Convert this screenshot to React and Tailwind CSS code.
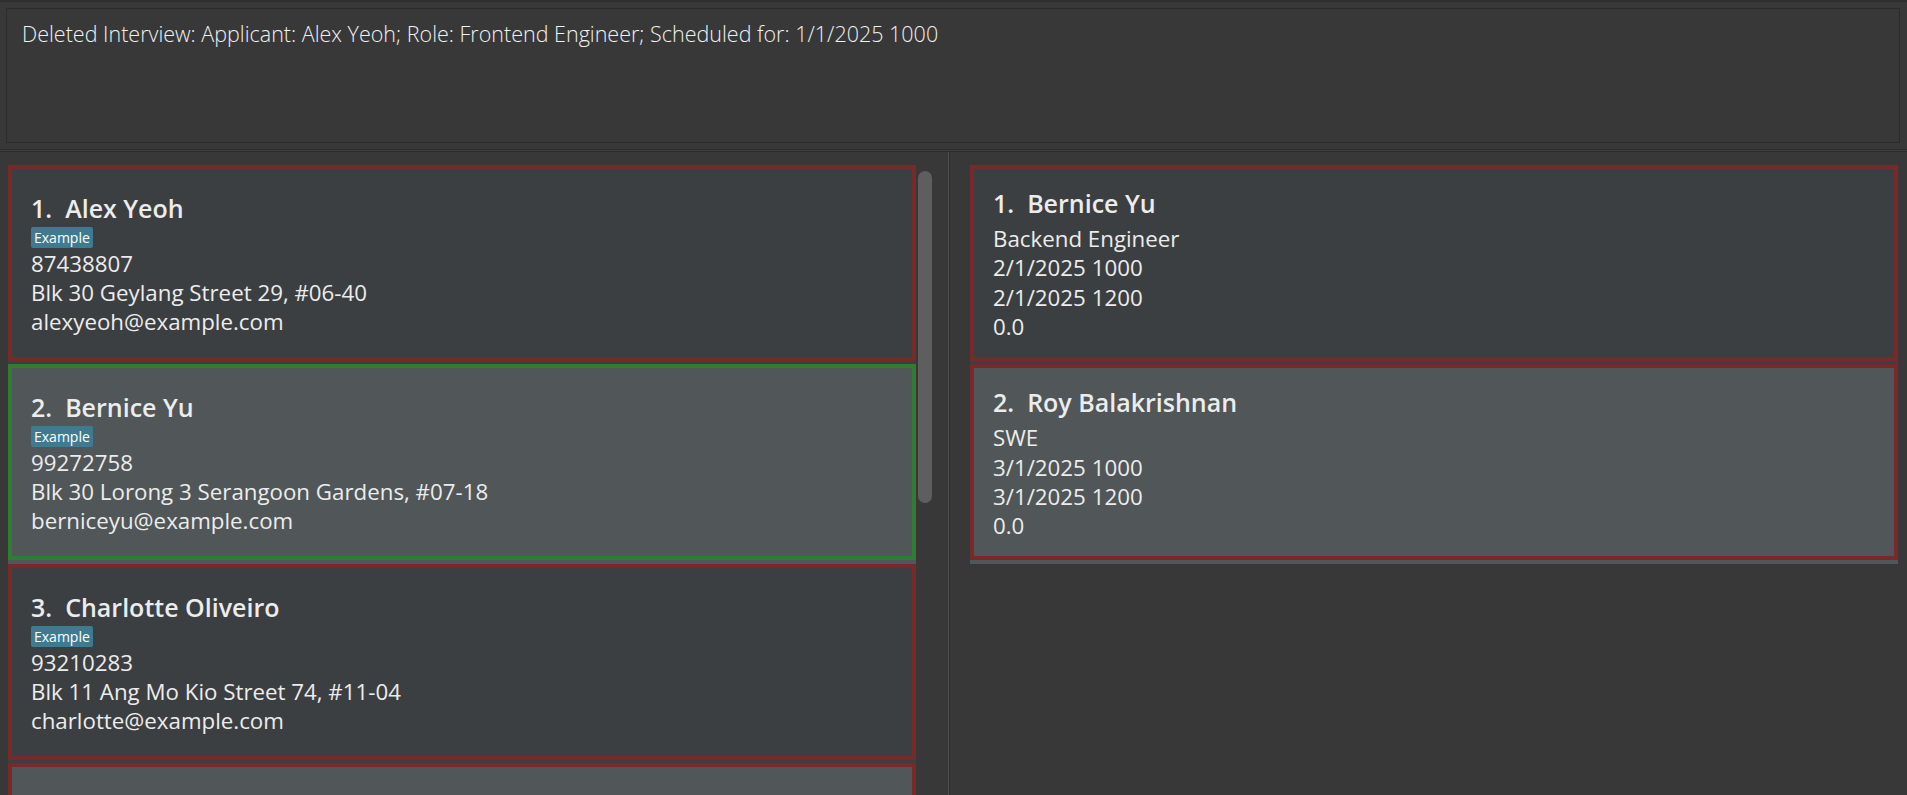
import React from "react";

const applicants = [
  {
    name: "Alex Yeoh",
    phone: "87438807",
    address: "Blk 30 Geylang Street 29, #06-40",
    email: "alexyeoh@example.com",
  },
  {
    name: "Bernice Yu",
    phone: "99272758",
    address: "Blk 30 Lorong 3 Serangoon Gardens, #07-18",
    email: "berniceyu@example.com",
    selected: true,
  },
  {
    name: "Charlotte Oliveiro",
    phone: "93210283",
    address: "Blk 11 Ang Mo Kio Street 74, #11-04",
    email: "charlotte@example.com",
  },
];

const interviews = [
  { name: "Bernice Yu", role: "Backend Engineer", start: "2/1/2025 1000", end: "2/1/2025 1200", score: "0.0" },
  { name: "Roy Balakrishnan", role: "SWE", start: "3/1/2025 1000", end: "3/1/2025 1200", score: "0.0" },
];

const Cell = ({ index, selected, children }) => {
  const odd = index % 2 === 1;
  return (
    <div className={`pb-[3.3px] ${odd ? "bg-[#515658]" : "bg-[#3c3f41]"}`}>
      <div
        className={`h-[196px] border-[4px] ${
          selected ? "border-[#2e7d32]" : "border-[#782a2a]"
        }`}
      >
        {children}
      </div>
    </div>
  );
};

const ApplicantCard = ({ person, index }) => (
  <Cell index={index} selected={person.selected}>
    <div className="pl-[19px] pt-[23px] text-[#ececec]">
      <div className="h-[32px] text-[25px] leading-[32px] font-semibold whitespace-pre">
        {`${index + 1}.  ${person.name}`}
      </div>
      <div className="mt-[3px] flex">
        <span className="h-[21px] rounded-[2px] bg-[#3e7b91] px-[3px] text-[14px] leading-[21px] text-white">
          Example
        </span>
      </div>
      <div className="mt-[1px] text-[22.3px] leading-[29px]">
        <div>{person.phone}</div>
        <div>{person.address}</div>
        <div>{person.email}</div>
      </div>
    </div>
  </Cell>
);

const InterviewCard = ({ item, index }) => (
  <Cell index={index}>
    <div className="pl-[19px] pt-[18px] text-[#ececec]">
      <div className="h-[32px] text-[25px] leading-[32px] font-semibold whitespace-pre">
        {`${index + 1}.  ${item.name}`}
      </div>
      <div className="mt-[5px] text-[22.3px] leading-[29.3px]">
        <div>{item.role}</div>
        <div>{item.start}</div>
        <div>{item.end}</div>
        <div>{item.score}</div>
      </div>
    </div>
  </Cell>
);

export default function App() {
  return (
    <div className="flex h-[795px] w-[1907px] flex-col overflow-hidden bg-[#383838] font-['Open_Sans',sans-serif]">
      <div className="h-[2px] bg-[#2e2e2e]" />

      {/* result display */}
      <div className="pl-[6px] pr-[7px] pt-[6px] pb-[6px]">
        <div className="h-[135px] border border-[#2b2b2b] bg-[#383838] pl-[15px] pt-[10px]">
          <p className="text-[21.5px] font-light leading-[30px] text-[#f0f0f0]">
            Deleted Interview: Applicant: Alex Yeoh; Role: Frontend Engineer; Scheduled for: 1/1/2025 1000
          </p>
        </div>
      </div>

      <div className="h-[1px] bg-[#2b2b2b]" />
      <div className="h-[1px] bg-[#3e3e3e]" />
      <div className="h-[1px] bg-[#2b2b2b]" />

      <div className="flex min-h-0 flex-1">
        {/* applicant list */}
        <div className="flex w-[948px] pl-[8px] pt-[13px]">
          <div className="w-[908px]">
            {applicants.map((p, i) => (
              <ApplicantCard key={p.name} person={p} index={i} />
            ))}
            <Cell index={3} />
          </div>
          <div className="ml-[2px] pt-[6px]">
            <div className="h-[332px] w-[14px] rounded-full bg-[#5e5e5e]" />
          </div>
        </div>

        <div className="w-[1px] bg-[#4f4f4f]" />
        <div className="w-[1px] bg-[#2f2f2f]" />

        {/* interview list */}
        <div className="flex-1 pl-[20px] pt-[13px]">
          <div className="w-[928px]">
            {interviews.map((it, i) => (
              <InterviewCard key={it.name} item={it} index={i} />
            ))}
          </div>
        </div>
      </div>
    </div>
  );
}
